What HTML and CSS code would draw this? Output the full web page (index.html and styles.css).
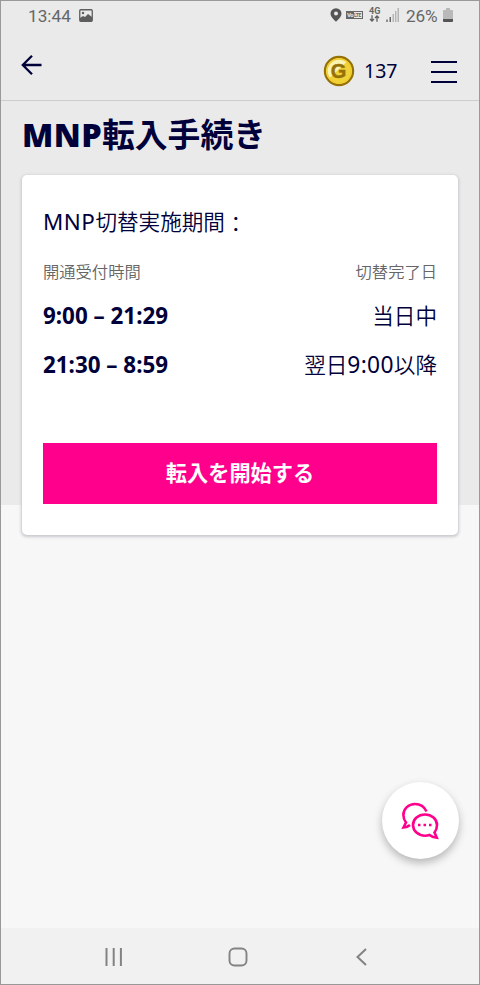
FILE: index.html
```html
<!DOCTYPE html>
<html lang="ja">
<head>
<meta charset="utf-8">
<title>MNP転入手続き</title>
<link rel="stylesheet" href="styles.css">
</head>
<body>
<div class="phone">
  <div class="status">
    <span class="clock">13:44</span>
    <svg class="photo" width="14" height="13" viewBox="0 0 14 13"><rect x=".75" y=".75" width="12.5" height="11.5" rx="1" fill="none" stroke="#5e5e5e" stroke-width="1.3"/><circle cx="4" cy="4" r="1.2" fill="#5e5e5e"/><path d="M1 12V9l3-2 2 1 3-3 4 3v4z" fill="#5e5e5e"/></svg>
    <div class="indicators">
      <svg width="12" height="14" viewBox="0 0 12 14"><path fill="#555" fill-rule="evenodd" d="M6 .2A5.5 5.5 0 0 0 .5 5.7C.5 9 6 13.6 6 13.6S11.500 9 11.500 5.700A5.500 5.500 0 0 0 6 .2zM6 3.500a2 2 0 1 1 0 4 2 2 0 0 1 0-4z"/></svg>
      <span class="volte"><b>Vo</b><i>LTE</i></span>
      <div class="network"><span>4G</span><svg width="11" height="7" viewBox="0 0 11 7"><path d="M3 .3v5M1 4l2 2 2-2M8 6.700V1.500M6 3l2-2 2 2" fill="none" stroke="#5e5e5e" stroke-width="1.300"/></svg></div>
      <svg class="signal" width="13" height="14" viewBox="0 0 13 14"><path d="M.3 11.500h1.400V14H.3zM3.500 9H5v5H3.500z" fill="#666"/><path d="M6.500 6H8v8H6.500zM9 3h1.400v11H9zM11.500 0H13v14h-1.500z" fill="#b4b4b4"/></svg>
      <span class="percent">26%</span>
      <svg class="battery" width="10" height="15" viewBox="0 0 10 15"><path d="M3 0h4v2h2.200q.8 0 .8.800V11H0V2.800Q0 2 .8 2H3z" fill="#b9b9b9"/><path d="M0 11h10v2q0 1-1 1H1q-1 0-1-1z" fill="#555"/></svg>
    </div>
  </div>
  <header class="appbar">
    <svg class="back" width="22" height="22" viewBox="0 0 22 22"><path d="M20.500 11H2M11 1.800 1.800 11l9.200 9.200" fill="none" stroke="#00003a" stroke-width="2.300"/></svg>
    <div class="points">
      <svg class="coin" width="32" height="32" viewBox="0 0 32 32"><circle cx="16" cy="16" r="14.100" fill="#f0d138" stroke="#967108" stroke-width="2.200"/><path d="M16 3.500A12.500 12.500 0 0 0 3.500 16c0 3 1 5.500 2.500 7.500L24 6.500A12.500 12.500 0 0 0 16 3.500z" fill="#fbf3b2"/><circle cx="16" cy="16" r="12" fill="none" stroke="#f2cd2f" stroke-width="1.500"/><text x="15.500" y="23" text-anchor="middle" class="coin-letter">G</text></svg>
      <span class="amount">137</span>
    </div>
    <div class="menu"><i></i><i></i><i></i></div>
  </header>
  <main class="content">
    <h1><span class="latin">MNP</span>転入手続き</h1>
    <section class="card">
      <h2><span class="latin">MNP</span>切替実施期間<span class="colon">：</span></h2>
      <div class="row labels"><span>開通受付時間</span><span>切替完了日</span></div>
      <div class="row"><b>9:00 – 21:29</b><span>当日中</span></div>
      <div class="row"><b>21:30 – 8:59</b><span>翌日<span class="latin">9:00</span>以降</span></div>
      <button>転入を開始する</button>
    </section>
  </main>
  <div class="chat"><svg width="38" height="38" viewBox="0 0 38 38"><g fill="none" stroke="#ff008c" stroke-width="2.600"><path d="M25.500 9.500C23.500 5 19 2 14 2 7.500 2 2.400 6.800 2.400 13c0 3 1 5.500 2.600 7.500L2.500 25.500q4-.3 6.500-2.500"/><path d="M24 12.500c-6.700 0-12 4.600-12 10.500s5.300 10.700 12 10.700q2.400 0 4.500-.8 3.200 2.500 7.300 2.900L33.500 30.500c1.500-2 2.500-4.500 2.500-7.500 0-5.900-5.300-10.500-12-10.500z"/></g><path d="M17 21.800h2.500v2.500H17zM22.500 21.800H25v2.500h-2.500zM28 21.800h2.500v2.500H28z" fill="#ff008c"/></svg></div>
  <nav class="nav">
    <svg width="18" height="18" viewBox="0 0 18 18"><path d="M1.500 0v18M8.700 0v18M15.900 0v18" stroke="#838383" stroke-width="2"/></svg>
    <svg width="20" height="20" viewBox="0 0 20 20"><rect x="1.500" y="1.500" width="17" height="17" rx="5" fill="none" stroke="#838383" stroke-width="1.900"/></svg>
    <svg width="12" height="18" viewBox="0 0 12 18"><path d="M11 1 2.500 9l8.500 8" fill="none" stroke="#838383" stroke-width="2"/></svg>
  </nav>
</div>
</body>
</html>
```
FILE: styles.css
```css
* { box-sizing: border-box; }
body { margin: 0; font-family: "Noto Sans", "Noto Sans CJK JP", sans-serif; color: #00003a; }
svg { display: block; flex: none; }
.phone { position: relative; display: flex; flex-direction: column; width: 480px; height: 985px; border: 1px solid #999; background: linear-gradient(#eaeaea 504px, #f7f7f7 504px); }
.status { height: 29px; display: flex; align-items: center; padding: 0 26px 0 27px; font-family: Roboto, sans-serif; font-size: 17.200px; color: #666; }
.clock { width: 43px; white-space: nowrap; }
.photo { margin: -1px 0 0 8px; }
.indicators { display: flex; align-items: center; margin: -1px 0 0 auto; }
.volte { display: flex; width: 17px; height: 8px; margin-left: 4px; border: 1px solid #666; font-size: 6px; line-height: 6px; overflow: hidden; }
.volte b { width: 7px; background: #666; color: #eee; letter-spacing: -.5px; }
.volte i { font-style: normal; font-weight: bold; font-size: 5px; letter-spacing: -.4px; }
.network { margin-left: 6px; width: 11px; font-size: 9px; line-height: 7px; font-weight: 700; }
.signal { margin-left: 6px; }
.percent { margin: 1px 0 0 7px; width: 33px; white-space: nowrap; letter-spacing: -.2px; }
.battery { margin-left: 4px; }
.appbar { height: 71px; border-bottom: 1px solid #cdcdcd; display: flex; padding: 0 22px 0 20px; }
.back { margin-top: 24px; }
.points { display: flex; align-items: center; height: 32px; margin: 25px 0 0 auto; }
.coin-letter { font: bold 20px "Liberation Sans", sans-serif; fill: #967108; stroke: #967108; stroke-width: .5px; }
.amount { width: 34px; margin: -1px 0 0 9px; font-size: 19.500px; }
.menu { width: 26px; height: 22px; display: flex; flex-direction: column; justify-content: space-between; margin: 31px 0 0 33px; }
.menu i { height: 2px; background: #00003a; }
.content { flex: 1; padding: 8px 20px 0; }
h1 { margin: 0 1px; font-size: 32.800px; line-height: 50px; height: 66px; font-weight: 700; white-space: nowrap; }
h1 .latin { font-weight: 900; font-size: 32.400px; letter-spacing: .4px; }
.card { height: 360px; margin: 0 1px; padding: 25px 21px; border-radius: 5px; background: #fff; box-shadow: 0 1px 3px 1px #c8c8ce; }
h2 { margin: 0; font-size: 21.600px; line-height: 44px; font-weight: 350; white-space: nowrap; }
.latin { font-weight: 400; }
h2 .latin { font-size: 22.400px; letter-spacing: .5px; }
.colon { position: relative; top: 2px; }
.row { display: flex; justify-content: space-between; align-items: center; height: 49px; font-size: 21.600px; font-weight: 350; line-height: 32px; white-space: nowrap; padding-bottom: 2px; }
.row .latin { font-size: 22.800px; letter-spacing: .3px; }
.row b { font-weight: 700; font-size: 22.400px; }
.labels { height: 48px; padding: 8px 0 0; font-size: 16.300px; color: #666; }
button { display: block; width: 100%; height: 61px; margin-top: 53px; padding: 0 0 4px; border: 0; background: #ff008c; color: #fff; font: bold 21.200px "Noto Sans CJK JP", sans-serif; }
.chat { position: absolute; right: 20px; top: 781px; width: 77px; height: 77px; padding-right: 2px; border-radius: 50%; background: #fff; box-shadow: 0 4px 9px #0004; display: flex; align-items: center; justify-content: center; }
.nav { height: 56px; background: #f1f1f1; display: flex; align-items: center; gap: 105px; padding: 2px 0 0 104px; }
.nav svg:last-child { margin-left: 2px; }
```
